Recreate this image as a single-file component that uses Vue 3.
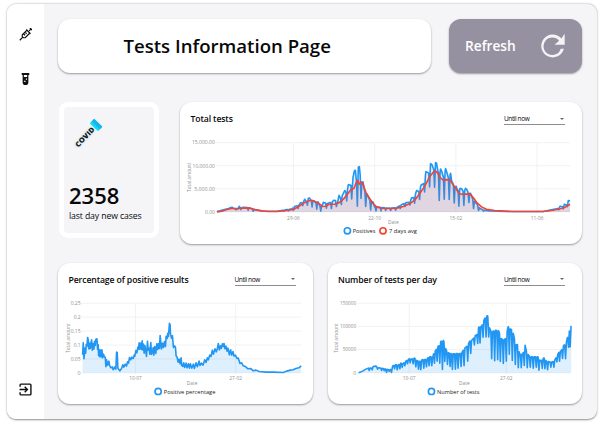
<script setup>
// Chart coordinates are in thirds of a pixel; each chart's viewBox maps them onto its card.
function heightAt(points, x) {
  for (let i = 1; i < points.length; i++) {
    const [ax, ay] = points[i - 1]
    const [bx, by] = points[i]
    if (x <= bx) return ay + ((by - ay) * (x - ax)) / (bx - ax || 1)
  }
  return points[points.length - 1][1]
}

// Weekly dips below an upper curve.
function withDips(points, dips) {
  const out = points.filter(([x]) => !dips.some(([d]) => Math.abs(d - x) < 2.5))
  for (const [x, y] of dips) {
    out.push([x - 2.5, heightAt(points, x - 2.5)], [x, y], [x + 2.5, heightAt(points, x + 2.5)])
  }
  return out.sort((a, b) => a[0] - b[0])
}

const line = (points) => 'M' + points.map(([x, y]) => `${x.toFixed(1)} ${y.toFixed(1)}`).join('L')
const area = (points, base) =>
  `${line(points)}L${points[points.length - 1][0]} ${base}L${points[0][0]} ${base}Z`

const average = [
  [110, 336], [125, 334], [140, 329], [155, 326], [170, 326], [185, 325], [205, 324], [225, 329],
  [245, 333], [265, 335], [290, 335], [320, 332], [340, 329], [355, 320], [370, 310], [385, 303],
  [395, 301], [405, 305], [418, 312], [428, 320], [437, 319], [447, 313], [465, 313], [478, 308],
  [490, 298], [500, 285], [512, 270], [522, 265], [530, 243], [534, 242], [537, 253], [543, 246],
  [548, 249], [552, 262], [558, 278], [568, 294], [578, 310], [590, 321], [605, 325], [630, 326],
  [650, 325], [670, 320], [690, 311], [705, 300], [720, 280], [735, 258], [748, 232], [760, 217],
  [766, 213], [773, 219], [780, 232], [790, 241], [800, 239], [810, 240], [818, 252], [828, 265],
  [838, 281], [845, 283], [870, 282], [880, 293], [890, 307], [905, 321], [920, 328], [945, 332],
  [1000, 335], [1090, 335], [1120, 331], [1145, 326], [1158, 321], [1171, 313]
]

const positives = withDips(
  [
    [110, 335], [130, 330], [145, 326], [152, 323], [156, 322], [160, 326], [174, 327], [177, 319],
    [181, 325], [190, 322], [205, 323], [225, 330], [250, 334], [290, 334], [320, 329], [335, 327],
    [345, 319], [355, 317], [362, 308], [368, 310], [374, 298], [379, 306], [384, 295], [388, 294],
    [393, 302], [402, 303], [406, 308], [414, 306], [419, 317], [426, 318], [430, 307], [434, 309],
    [443, 311], [448, 308], [455, 308], [461, 301], [467, 302], [472, 311], [477, 286], [481, 295],
    [487, 286], [494, 272], [500, 280], [505, 254], [512, 256], [517, 260], [519, 232], [523, 213],
    [526, 211], [529, 242], [533, 245], [535, 202], [538, 200], [541, 232], [545, 247], [549, 246],
    [553, 270], [560, 282], [570, 302], [579, 306], [584, 321], [600, 322], [625, 325], [650, 323],
    [667, 313], [679, 308], [690, 307], [695, 294], [703, 293], [710, 272], [718, 275], [723, 256],
    [733, 250], [738, 215], [744, 218], [749, 222], [752, 191], [756, 194], [760, 205], [765, 215],
    [767, 188], [770, 190], [774, 214], [779, 226], [782, 207], [786, 216], [792, 237], [797, 206],
    [801, 218], [806, 236], [812, 220], [815, 242], [824, 262], [829, 259], [833, 273], [841, 265],
    [846, 267], [852, 279], [857, 265], [861, 269], [866, 281], [872, 280], [880, 301], [891, 312],
    [900, 326], [912, 331], [930, 333], [980, 335], [1090, 335], [1115, 330], [1134, 326],
    [1142, 319], [1149, 321], [1154, 313], [1160, 316], [1166, 302], [1171, 303]
  ],
  [
    [167, 330], [182, 329], [204, 331], [219, 334], [310, 334], [325, 333], [340, 331], [354, 326],
    [368, 317], [382, 316], [396, 321], [410, 328], [422, 334], [439, 325], [454, 326], [469, 320],
    [484, 314], [500, 303], [515, 297], [532, 319], [543, 296], [557, 320], [572, 330], [588, 333],
    [603, 333], [617, 332], [632, 332], [647, 331], [661, 326], [675, 320], [690, 315], [704, 310],
    [719, 299], [734, 276], [749, 261], [764, 262], [778, 302], [793, 298], [808, 299], [823, 309],
    [837, 319], [852, 317], [867, 308], [881, 326], [896, 332], [911, 334], [1137, 330],
    [1151, 327], [1163, 320]
  ]
)

const percentage = [
  [97, 285], [99, 249], [101, 297], [104, 265], [106, 280], [108, 254], [110, 260], [112, 233],
  [114, 240], [116, 267], [118, 250], [120, 266], [122, 249], [124, 240], [126, 271], [128, 251],
  [131, 268], [133, 244], [135, 257], [137, 238], [140, 237], [142, 269], [144, 255], [145, 288],
  [147, 270], [149, 291], [151, 271], [153, 291], [155, 270], [157, 294], [160, 283], [162, 291],
  [165, 292], [167, 321], [169, 300], [172, 316], [176, 304], [178, 317], [182, 324], [186, 321],
  [189, 330], [194, 321], [197, 328], [199, 277], [201, 278], [203, 325], [206, 329], [209, 333],
  [214, 326], [218, 315], [221, 322], [225, 313], [229, 319], [232, 306], [235, 310], [238, 293],
  [242, 300], [245, 292], [249, 296], [252, 286], [254, 289], [257, 272], [260, 279], [263, 262],
  [265, 268], [267, 249], [269, 268], [272, 250], [274, 269], [276, 243], [278, 270], [280, 253],
  [282, 280], [284, 257], [287, 275], [289, 290], [292, 244], [294, 271], [297, 265], [299, 283],
  [302, 248], [304, 284], [307, 278], [309, 263], [311, 286], [314, 260], [317, 281], [320, 252],
  [323, 269], [325, 251], [328, 266], [330, 227], [332, 247], [334, 267], [337, 250], [340, 263],
  [343, 245], [346, 260], [348, 229], [351, 236], [353, 220], [355, 230], [358, 190], [360, 195],
  [361, 220], [364, 235], [367, 228], [370, 263], [373, 258], [376, 262], [378, 288], [381, 292],
  [384, 307], [387, 298], [390, 312], [393, 294], [395, 317], [398, 320], [401, 309], [404, 323],
  [408, 310], [411, 324], [415, 312], [418, 325], [421, 312], [425, 325], [430, 313], [433, 326],
  [438, 309], [442, 321], [447, 304], [450, 317], [454, 310], [459, 316], [464, 300], [468, 308],
  [472, 294], [475, 300], [479, 286], [483, 290], [487, 271], [490, 283], [495, 267], [499, 276],
  [502, 266], [505, 251], [508, 270], [511, 258], [514, 266], [517, 252], [520, 260], [522, 251],
  [525, 267], [528, 259], [531, 274], [534, 265], [538, 285], [542, 270], [545, 286], [549, 275],
  [552, 289], [556, 286], [561, 296], [565, 295], [570, 311], [575, 309], [580, 318], [586, 320],
  [594, 327], [602, 326], [610, 333], [618, 331], [628, 335], [650, 337], [670, 337], [700, 338],
  [710, 334], [722, 331], [730, 330], [738, 326], [747, 324], [754, 318]
]

const tests = withDips(
  [
    [116, 339], [128, 334], [138, 328], [145, 325], [155, 325], [160, 320], [168, 319], [175, 324],
    [190, 326], [203, 329], [215, 329], [219, 318], [227, 315], [235, 316], [243, 310], [250, 311],
    [258, 304], [268, 297], [276, 298], [284, 295], [291, 302], [300, 305], [309, 299], [320, 299],
    [329, 290], [339, 292], [344, 272], [348, 273], [352, 260], [357, 259], [361, 250], [364, 244],
    [368, 246], [371, 242], [374, 250], [378, 268], [384, 278], [390, 281], [400, 282], [410, 281],
    [425, 281], [433, 267], [443, 258], [450, 244], [458, 240], [466, 228], [473, 223], [477, 202],
    [486, 199], [494, 178], [500, 169], [504, 168], [507, 198], [514, 215], [519, 215], [527, 211],
    [537, 213], [544, 236], [552, 241], [559, 235], [565, 202], [568, 199], [572, 208], [578, 210],
    [583, 230], [588, 255], [594, 254], [600, 283], [607, 284], [612, 277], [616, 254], [621, 277],
    [630, 291], [655, 291], [663, 305], [668, 298], [674, 294], [680, 304], [694, 307], [704, 304],
    [710, 293], [718, 277], [725, 273], [733, 256], [739, 256], [743, 235], [747, 228], [750, 211],
    [753, 208], [755, 198]
  ],
  [
    [148, 332], [157, 330], [173, 328], [185, 332], [193, 333], [200, 338], [208, 335], [215, 338],
    [224, 327], [232, 330], [240, 327], [247, 323], [255, 318], [263, 312], [271, 309], [280, 312],
    [288, 321], [296, 328], [303, 330], [312, 325], [320, 321], [328, 318], [336, 318], [344, 310],
    [352, 304], [360, 310], [368, 329], [375, 305], [383, 314], [391, 320], [398, 329], [407, 328],
    [415, 325], [424, 320], [433, 318], [444, 304], [453, 281], [464, 255], [474, 251], [481, 249],
    [490, 232], [499, 231], [507, 231], [516, 297], [525, 303], [534, 300], [542, 305], [551, 311],
    [560, 304], [569, 283], [578, 302], [587, 314], [596, 324], [605, 324], [614, 317], [623, 324],
    [632, 322], [641, 325], [650, 322], [658, 331], [668, 326], [676, 327], [684, 330], [694, 322],
    [703, 322], [712, 306], [720, 304], [729, 296], [738, 297], [747, 262], [752, 261]
  ]
)

const charts = [
  {
    id: 'total', title: 'Total tests', box: '0 90 1206 341', left: 110, right: 1171,
    top: 128, base: 336, labelX: 104, axisX: 31,
    y: ['15,000.00', '10,000.00', '5,000.00', '0.00'], yw: [69, 67, 62, 30],
    x: [[340, '29-06'], [584, '22-10'], [828, '15-02'], [1072, '11-06']],
    dateX: 640, dateY: 370,
    series: [
      { points: positives, color: '#2196f3', fill: 'rgba(33,150,243,.15)' },
      { points: average, color: '#f44336', fill: 'rgba(244,67,54,.14)' }
    ],
    legend: [
      { text: 'Positives', color: '#2196f3', cx: 502, x: 518, w: 68 },
      { text: '7 days avg', color: '#f44336', cx: 609, x: 627, w: 84 }
    ],
    legendY: 393
  },
  {
    id: 'percent', title: 'Percentage of positive results', box: '23 94 765 338', left: 97, right: 754,
    top: 130, base: 339, labelX: 91, axisX: 56,
    y: ['0.25', '0.2', '0.15', '0.1', '0.05', '0'], yw: [30, 21, 30, 21, 30, 9],
    x: [[256, '10-07'], [557, '27-02']],
    dateX: 426, dateY: 373,
    series: [{ points: percentage, color: '#2196f3', fill: 'rgba(33,150,243,.15)' }],
    legend: [{ text: 'Positive percentage', color: '#2196f3', cx: 324, x: 341, w: 155 }],
    legendY: 395
  },
  {
    id: 'daily', title: 'Number of tests per day', box: '24 94 765 338', left: 116, right: 753,
    top: 130, base: 339, labelX: 109, axisX: 52,
    y: ['150000', '100000', '50000', '0'], yw: [49, 49, 41, 9],
    x: [[268, '10-07'], [560, '27-02']],
    dateX: 434, dateY: 373,
    series: [{ points: tests, color: '#2196f3', fill: 'rgba(33,150,243,.15)' }],
    legend: [{ text: 'Number of tests', color: '#2196f3', cx: 335, x: 352, w: 127 }],
    legendY: 395
  }
]

const rowY = (c, i) => c.top + ((c.base - c.top) * i) / (c.y.length - 1)
</script>

<template>
  <div class="shell">
    <nav class="sidebar">
      <svg class="nav-icon" viewBox="0 0 24 24">
        <g transform="rotate(45 12 12)" fill="none" stroke="#111" stroke-width="2.2">
          <path d="M8.500-2.500h7M12-2.500v5M6.500 4.500h11M8.200 5v11.500l2.300 2.500h3l2.300-2.500V5M12 19v8M8.500 9.500h4M8.500 13.500h4" />
        </g>
      </svg>
      <svg class="nav-icon tube" viewBox="0 0 24 24">
        <path fill="#111" fill-rule="evenodd" d="M5 1h14v3.500h-1.700V18a5.300 5.300 0 0 1-10.600 0V4.500H5zM9 4.500v4h6v-4zM12.600 11v2.200h2.200V11zM9.500 15v2.500H12V15z" />
      </svg>
      <svg class="nav-icon exit" viewBox="0 0 24 24" fill="none" stroke="#111" stroke-width="2.600">
        <path d="M2 7V3.500Q2 2 3.500 2h17Q22 2 22 3.500v17Q22 22 20.500 22h-17Q2 22 2 20.500V17M1 12h14M10.500 7l5 5-5 5" />
      </svg>
    </nav>

    <main class="content">
      <div class="top">
        <header class="card heading"><h1>Tests Information Page</h1></header>
        <button class="card refresh">
          <span>Refresh</span>
          <svg viewBox="0 0 24 24">
            <path d="M20.500 5.200A11 11 0 1 0 22.900 15h-3a8.400 8.400 0 1 1-1.600-7.600L14 11.200h9.700V.8z" fill="#f4f3f6" />
          </svg>
        </button>
      </div>

      <div class="board">
        <section class="stat">
          <svg class="covid" viewBox="0 0 90 96">
            <g transform="translate(8 82) rotate(-46)">
              <rect x="-8" y="-12" width="88" height="25" rx="12" fill="#e9f0f1" />
              <text x="-2" y="8" textLength="74" lengthAdjust="spacingAndGlyphs">COVID</text>
              <rect x="75" y="-18" width="9" height="35" rx="2" fill="#12dcf3" />
              <rect x="83" y="-18" width="11" height="35" rx="2" fill="#12b5ee" />
              <path d="M75-6h9M75 5h9" stroke="#0ec5ea" stroke-width="2" />
            </g>
          </svg>
          <strong>2358</strong>
          <p>last day new cases</p>
        </section>
        <section v-for="c in charts" :key="c.id" class="card chart" :class="c.id">
          <div class="chart-head">
            <h2>{{ c.title }}</h2>
            <div class="select"><span>Until now</span><i></i></div>
          </div>
          <svg class="plot" :viewBox="c.box">
            <g class="grid">
              <path v-for="(t, i) in c.y" :key="t" :d="`M${c.left - 4} ${rowY(c, i)}H${c.right}`" />
              <path v-for="t in c.x" :key="t[0]" :d="`M${t[0]} ${c.top}V${c.base + 5}`" />
            </g>
            <g class="ticks">
              <text v-for="(t, i) in c.y" :key="t" :x="c.labelX" :y="rowY(c, i) + 5.5" text-anchor="end" :textLength="c.yw[i]" lengthAdjust="spacingAndGlyphs">{{ t }}</text>
              <text v-for="t in c.x" :key="t[0]" :x="t[0]" :y="c.base + 23" text-anchor="middle" textLength="38" lengthAdjust="spacingAndGlyphs">{{ t[1] }}</text>
              <text :x="c.dateX - 16" :y="c.dateY + 2" textLength="32" lengthAdjust="spacingAndGlyphs">Date</text>
              <text :transform="`translate(${c.axisX + 2} ${c.base - 60}) rotate(-90)`" textLength="88" lengthAdjust="spacingAndGlyphs">Total amount</text>
            </g>
            <g v-for="s in c.series" :key="s.color">
              <path :d="area(s.points, c.base)" :fill="s.fill" />
              <path class="line" :d="line(s.points)" :stroke="s.color" />
            </g>
            <g v-for="l in c.legend" :key="l.text" class="legend">
              <circle :cx="l.cx" :cy="c.legendY" r="9.3" :stroke="l.color" />
              <text :x="l.x" :y="c.legendY + 7" :textLength="l.w" lengthAdjust="spacingAndGlyphs">{{ l.text }}</text>
            </g>
          </svg>
        </section>
      </div>
    </main>
  </div>
</template>

<style>
body {
  margin: 0;
  background: #fff;
}
#app {
  padding: 4px 0 8px 6.5px;
}
</style>

<style scoped>
.shell {
  display: flex;
  width: 590.5px;
  height: 415px;
  border-radius: 9px;
  overflow: hidden;
  background: #f5f5f8;
  font-family: 'Open Sans', 'Noto Sans', sans-serif;
  color: #080808;
  box-shadow: 0 0.7px 2px rgba(0, 0, 0, 0.45);
}
.sidebar {
  display: flex;
  flex-direction: column;
  align-items: center;
  box-sizing: border-box;
  width: 37.5px;
  padding: 24px 0 23.500px;
  background: #fff;
}
.nav-icon {
  width: 13px;
  height: 13px;
}
.tube {
  margin-top: 31px;
  height: 14px;
}
.exit {
  margin-top: auto;
}
.content {
  width: 524px;
  padding: 15px 15px 0 14px;
}
.top {
  display: flex;
  height: 54px;
  gap: 18px;
}
.board {
  display: flex;
  flex-wrap: wrap;
  justify-content: space-between;
  row-gap: 19px;
  margin-top: 29px;
}
.card {
  box-sizing: border-box;
  border-radius: 12px;
  background: #fff;
  box-shadow: 0 1px 2px rgba(0, 0, 0, 0.38);
}
.heading {
  width: 373px;
  padding: 13px 0 0 65.500px;
}
h1 {
  margin: 0;
  font-size: 18.600px;
  line-height: 28px;
  font-weight: 600;
  white-space: nowrap;
}
.refresh {
  display: flex;
  align-items: center;
  justify-content: space-between;
  width: 133px;
  padding: 0 17px 2px 16px;
  border: 0;
  background: #9691a0;
  color: #fff;
  font: 600 13.700px 'Open Sans', 'Noto Sans', sans-serif;
}
.refresh svg {
  width: 25px;
  height: 25px;
}
.stat {
  display: flex;
  flex-direction: column;
  align-items: flex-start;
  box-sizing: border-box;
  width: 100px;
  height: 136px;
  margin-left: 1px;
  padding: 11px 0 0 5px;
  border: 5px solid #fff;
  border-radius: 9px;
}
.covid {
  width: 30px;
  height: 32px;
  margin-left: 5px;
  overflow: visible;
}
.covid text {
  font: 800 21px 'Open Sans', sans-serif;
  fill: #102029;
}
.stat strong {
  margin-top: 30px;
  font-size: 22px;
  line-height: 30px;
  font-weight: 600;
}
.stat p {
  margin: 0;
  font-size: 8.700px;
  line-height: 12px;
  letter-spacing: -0.12px;
  white-space: nowrap;
}
.chart {
  display: flex;
  flex-direction: column;
}
.chart.total {
  width: 402px;
  height: 141.500px;
}
.chart.percent,
.chart.daily {
  width: 254.500px;
  height: 141px;
}
.chart-head {
  display: flex;
  flex: none;
  align-items: flex-start;
  justify-content: space-between;
  box-sizing: border-box;
  height: 28px;
  padding: 10px 17px 0 10.500px;
}
h2 {
  margin: 0;
  font-size: 8.700px;
  line-height: 14px;
  font-weight: 600;
  letter-spacing: -0.13px;
  white-space: nowrap;
}
.select {
  display: flex;
  align-items: center;
  justify-content: space-between;
  box-sizing: border-box;
  width: 61px;
  height: 13px;
  padding: 1px 1px 0 0;
  border-bottom: 1px solid #8d8d8d;
  font-size: 6.500px;
  letter-spacing: -0.4px;
}
.select i {
  border: 2.200px solid transparent;
  border-top-color: #666;
  border-bottom: 0;
}
.plot {
  display: block;
  flex: 1;
  min-height: 0;
  width: 100%;
}
.grid {
  fill: none;
  stroke: #f2f2f2;
  stroke-width: 3;
}
.ticks text {
  font-size: 15px;
  fill: #8f8f8f;
}
.line {
  fill: none;
  stroke-width: 4.800;
  stroke-linejoin: round;
}
.legend circle {
  fill: #fff;
  stroke-width: 5;
}
.legend text {
  font-size: 18px;
  fill: #222;
}
</style>
